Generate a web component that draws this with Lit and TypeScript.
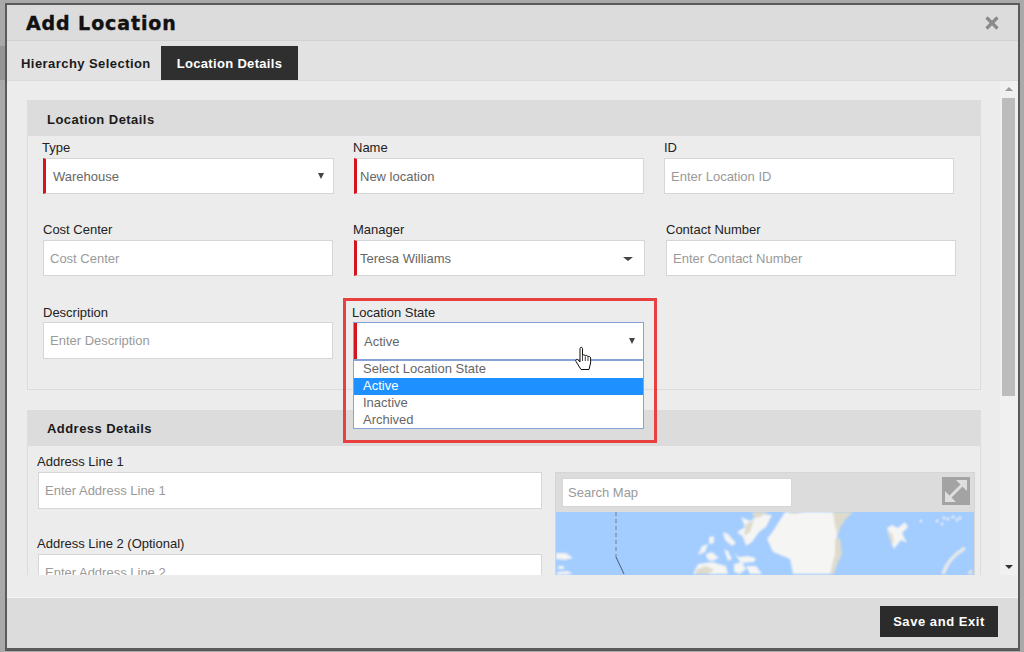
import { LitElement, html, css, svg } from "lit";
import { customElement } from "lit/decorators.js";

@customElement("app-root")
export class AppRoot extends LitElement {
  static styles = css`
    :host {
      display: flex;
      position: relative;
      width: 1024px;
      height: 652px;
      overflow: hidden;
      background: #a9a9a9;
      font-family: "Liberation Sans", Arial, sans-serif;
      font-size: 13px;
      color: #222;
    }
    .strip {
      width: 5px;
      flex: none;
      padding-top: 46px;
    }
    .strip .block {
      height: 34px;
      background: #959595;
    }
    .modal {
      width: 1011px;
      height: 643px;
      margin-top: 3px;
      border: 2px solid #5a5a5a;
      border-bottom-width: 3px;
      background: #ececec;
      display: flex;
      flex-direction: column;
      flex: none;
    }
    .head {
      height: 35px;
      flex: none;
      display: flex;
      justify-content: space-between;
      align-items: center;
      padding: 0 19px 0 19px;
      background: #dcdcdc;
      border-bottom: 1px solid #d2d2d2;
    }
    .title {
      font-family: "DejaVu Sans", sans-serif;
      font-weight: 700;
      font-size: 19px;
      color: #111;
      letter-spacing: 0.9px;
      -webkit-text-stroke: 0.4px #111;
      padding-top: 1px;
    }
    .close {
      display: block;
      width: 14px;
      height: 14px;
    }
    .tabs {
      height: 39px;
      flex: none;
      display: flex;
      align-items: flex-end;
      background: #e2e2e2;
      border-bottom: 1px solid #dadada;
    }
    .tab {
      height: 34px;
      line-height: 35px;
      font-weight: 700;
      letter-spacing: 0.44px;
      color: #1a1a1a;
      padding: 0 10px 0 14px;
    }
    .tab.on {
      background: #2f2f2f;
      color: #fff;
      padding: 0 16px 0 16px;
      letter-spacing: 0.32px;
    }
    .main {
      height: 494px;
      flex: none;
      display: flex;
      overflow: hidden;
    }
    .content {
      width: 993px;
      flex: none;
      padding: 19px 0 0 20px;
      box-sizing: border-box;
    }
    .panel {
      width: 954px;
      box-sizing: border-box;
      border: 1px solid #dcdcdc;
      border-top: 0;
      margin-bottom: 20px;
    }
    .panel.first {
      height: 290px;
    }
    .panel-head {
      height: 36px;
      line-height: 38px;
      margin: 0 -1px;
      padding-left: 20px;
      background: #dcdcdc;
      font-weight: 700;
      letter-spacing: 0.45px;
      color: #1a1a1a;
    }
    .panel.first .panel-head {
      line-height: 39px;
    }
    .row {
      display: grid;
      padding-left: 15px;
      padding-top: 4px;
    }
    .row.a {
      grid-template-columns: 291px 290px 290px;
      column-gap: 20px;
    }
    .row.b {
      grid-template-columns: 290px 291px 290px;
      column-gap: 21px;
      padding-top: 28px;
    }
    .row.c {
      grid-template-columns: 290px 291px;
      column-gap: 20px;
      padding-top: 29px;
    }
    label {
      display: block;
      height: 15px;
      line-height: 15px;
      margin: 0 0 3px -1px;
      color: #222;
    }
    label.flush {
      margin-left: 0;
    }
    .row.c label {
      margin-bottom: 2px;
    }
    input,
    .select {
      display: block;
      width: 100%;
      height: 36px;
      box-sizing: border-box;
      border: 1px solid #d6d6d6;
      background: #fff;
      padding: 0 6px;
      font: 13px "Liberation Sans", Arial, sans-serif;
      color: #666;
      outline: none;
      border-radius: 0;
    }
    input::placeholder {
      color: #9a9a9a;
      opacity: 1;
    }
    .row.c input {
      height: 37px;
    }
    .req {
      border-left: 3px solid #d4141e;
      padding-left: 3px;
    }
    .select {
      display: flex;
      align-items: center;
      justify-content: space-between;
      padding: 0 9px 0 7px;
      border-left: 3px solid #d4141e;
    }
    .select.tall {
      margin-top: 1px;
      padding-left: 3px;
      padding-top: 1px;
    }
    .select.focus {
      height: 38px;
      border: 1px solid #85a3d4;
      box-shadow: inset 3px 0 0 #d4141e;
      padding: 0 8px 0 10px;
    }
    .caret {
      width: 0;
      height: 0;
      border-left: 3px solid transparent;
      border-right: 3px solid transparent;
      border-top: 6px solid #444;
    }
    .caret.wide {
      border-left-width: 5px;
      border-right-width: 5px;
      border-top-width: 4px;
      margin-right: 2px;
    }
    .slot {
      position: relative;
    }
    .options {
      position: absolute;
      left: 0;
      right: 0;
      top: 55px;
      z-index: 2;
      box-sizing: border-box;
      height: 69px;
      background: #fff;
      border: 1px solid #85a3d4;
      color: #666;
    }
    .options div {
      height: 17px;
      line-height: 16px;
      padding-left: 9px;
    }
    .options .sel {
      background: #1e90ff;
      color: #fff;
    }
    .address {
      display: grid;
      grid-template-columns: 504px 420px;
      column-gap: 13px;
      padding: 8px 0 0 10px;
    }
    .address input {
      height: 37px;
    }
    .address .f + .f {
      margin-top: 27px;
    }
    .mapbox {
      margin-top: 18px;
      border: 1px solid #d6d6d6;
      background: #dcdcdc;
    }
    .map-bar {
      height: 39px;
      display: flex;
      justify-content: space-between;
      padding: 5px 4px 0 6px;
      box-sizing: border-box;
    }
    .map-bar input {
      width: 230px;
      height: 29px;
      padding: 0 5px;
    }
    .expand {
      display: block;
      width: 28px;
      height: 28px;
      margin-top: -1px;
    }
    .map {
      display: block;
      width: 418px;
      height: 120px;
    }
    .land {
      filter: blur(0.8px);
    }
    .bar {
      width: 17px;
      flex: none;
      background: #f0f0f0;
      display: flex;
      flex-direction: column;
      align-items: center;
    }
    .up {
      margin-top: 6px;
      width: 0;
      height: 0;
      border-left: 4px solid transparent;
      border-right: 4px solid transparent;
      border-bottom: 4px solid #9a9a9a;
    }
    .thumb {
      width: 13px;
      height: 298px;
      margin-top: 7px;
      background: #bcbcbc;
    }
    .down {
      margin-top: auto;
      margin-bottom: 6px;
      width: 0;
      height: 0;
      border-left: 4px solid transparent;
      border-right: 4px solid transparent;
      border-top: 4px solid #333;
    }
    .gap {
      height: 22px;
      flex: none;
    }
    .foot {
      flex: 1;
      display: flex;
      justify-content: flex-end;
      align-items: flex-start;
      padding: 8px 20px 0 0;
      background: #dcdcdc;
      border-top: 1px solid #f4f4f4;
    }
    .save {
      width: 118px;
      height: 31px;
      border: 0;
      background: #2b2b2b;
      color: #fff;
      font: 700 13px "Liberation Sans", Arial, sans-serif;
      letter-spacing: 0.55px;
      padding: 0;
    }
    .callout {
      position: absolute;
      left: 343px;
      top: 298px;
      width: 314px;
      height: 145px;
      box-sizing: border-box;
      border: 3px solid #e8403f;
      z-index: 3;
      pointer-events: none;
    }
    .hand {
      position: absolute;
      left: 574px;
      top: 346px;
      width: 20px;
      height: 26px;
      z-index: 4;
    }
  `;

  private mapShapes() {
    const snow = [
      "229,0 280,0 281,24 280,40 275,62 237,62 234,47 217,40 211,27 217,19",
      "331,16 336,13 342,16 349,10 352,15 346,21 351,31 345,28 338,37 335,30 333,24",
      "0,41 10,41 17,46 9,48 0,47",
      "2,54 8,54 8,57 2,57",
      "1,60 12,59 17,62 1,63",
      "185,5 194,9 204,2 216,3 210,15 203,20 196,30 190,34 187,25 181,20 189,15",
      "167,20 172,22 180,31 176,34 169,28",
      "153,25 158,24 158,31 153,32",
      "146,34 152,32 149,40 142,43",
      "150,42 156,40 163,46 156,49 151,47",
      "168,37 172,39 176,47 172,49",
      "178,41 183,45 192,44 200,46 198,50 185,51",
      "178,52 186,50 190,57 184,62 178,60",
      "190,54 200,54 206,62 194,62",
      "142,52 156,50 170,54 172,62 137,62",
    ];
    const tan = [
      "277,0 297,0 289,8 284,16 282,24 279,14",
      "279,27 284,26 286,42 282,50 278,62 274,62 279,42",
      "196,0 212,0 204,5 198,6",
      "230,0 248,0 238,2",
      "140,58 150,54 158,58 152,62 140,62",
      "190,12 198,8 194,20 188,24",
      "332,18 336,22 338,30 335,31",
    ];
    const specks = [
      [381, 9],
      [386, 12],
      [392, 7],
      [397, 5],
      [401, 8],
      [404, 6],
      [388, 6],
      [365, 9],
    ];
    return svg`
      <rect width="418" height="120" fill="#a3ccff"></rect>
      <g class="land">
        ${snow.map((p) => svg`<polygon points=${p} fill="#f5f5f3"></polygon>`)}
        ${tan.map((p) => svg`<polygon points=${p} fill="#dedbcd"></polygon>`)}
        ${specks.map(([x, y]) => svg`<circle cx=${x} cy=${y} r="1.4" fill="#f4f4f4"></circle>`)}
        <path d="M387 62 Q392 46 409 36" fill="none" stroke="#ebebe6" stroke-width="3.5"></path>
        <path d="M411 62 L415 57 L417 62Z" fill="#e8e8e4"></path>
      </g>
      <path d="M60 0 V45" stroke="#7d8ea8" stroke-width="1.3" stroke-dasharray="4 3" fill="none"></path>
      <path d="M60 45 L68 62" stroke="#4d5a6c" stroke-width="1" fill="none"></path>
    `;
  }

  render() {
    return html`
      <div class="strip"><div class="block"></div></div>
      <div class="modal">
        <div class="head">
          <span class="title">Add Location</span>
          <svg class="close" viewBox="0 0 14 14">
            <path d="M1.5 1.5 L12.5 12.5 M12.5 1.5 L1.5 12.5" stroke="#8a8a8a" stroke-width="3.2"></path>
          </svg>
        </div>
        <div class="tabs">
          <div class="tab">Hierarchy Selection</div>
          <div class="tab on">Location Details</div>
        </div>
        <div class="main">
          <div class="content">
            <section class="panel first">
              <div class="panel-head">Location Details</div>
              <div class="row a">
                <div class="f">
                  <label>Type</label>
                  <div class="select">Warehouse<span class="caret"></span></div>
                </div>
                <div class="f">
                  <label>Name</label>
                  <input class="req" .value=${"New location"} />
                </div>
                <div class="f">
                  <label class="flush">ID</label>
                  <input placeholder="Enter Location ID" />
                </div>
              </div>
              <div class="row b">
                <div class="f">
                  <label class="flush">Cost Center</label>
                  <input placeholder="Cost Center" />
                </div>
                <div class="f">
                  <label>Manager</label>
                  <div class="select tall">Teresa Williams<span class="caret wide"></span></div>
                </div>
                <div class="f">
                  <label class="flush">Contact Number</label>
                  <input placeholder="Enter Contact Number" />
                </div>
              </div>
              <div class="row c">
                <div class="f">
                  <label class="flush">Description</label>
                  <input placeholder="Enter Description" />
                </div>
                <div class="f slot">
                  <label>Location State</label>
                  <div class="select focus">Active<span class="caret"></span></div>
                  <div class="options">
                    <div>Select Location State</div>
                    <div class="sel">Active</div>
                    <div>Inactive</div>
                    <div>Archived</div>
                  </div>
                </div>
              </div>
            </section>
            <section class="panel">
              <div class="panel-head">Address Details</div>
              <div class="address">
                <div>
                  <div class="f">
                    <label>Address Line 1</label>
                    <input placeholder="Enter Address Line 1" />
                  </div>
                  <div class="f">
                    <label>Address Line 2 (Optional)</label>
                    <input placeholder="Enter Address Line 2" />
                  </div>
                </div>
                <div class="mapbox">
                  <div class="map-bar">
                    <input placeholder="Search Map" />
                    <svg class="expand" viewBox="0 0 28 28">
                      <rect width="28" height="28" fill="#a3a3a3"></rect>
                      <path d="M8 20 L20 8" stroke="#dedede" stroke-width="3"></path>
                      <path d="M14 3 H25 V14 Z M3 14 V25 H14 Z" fill="#dedede"></path>
                    </svg>
                  </div>
                  <svg class="map" viewBox="0 0 418 120">${this.mapShapes()}</svg>
                </div>
              </div>
            </section>
          </div>
          <div class="bar">
            <span class="up"></span>
            <span class="thumb"></span>
            <span class="down"></span>
          </div>
        </div>
        <div class="gap"></div>
        <div class="foot"><button class="save">Save and Exit</button></div>
      </div>
      <div class="callout"></div>
      <svg class="hand" viewBox="0 0 20 26">
        <path
          d="M6 2.5 C6 1 8.5 1 8.5 2.5 V9.5 C9 8.5 11 8.5 11.3 10 C11.8 9 13.7 9.2 14 10.8 C14.6 10 16.5 10.4 16.6 12 V17 L15 23.5 H7 L2 15.5 C1 13.5 3 12.6 4.2 14 L6 16 Z"
          fill="#fff"
          stroke="#111"
          stroke-width="1"
          stroke-linejoin="round"
        ></path>
        <path d="M8.5 10 V15 M11.3 10.5 V15 M14 11 V15" stroke="#111" stroke-width="0.8"></path>
      </svg>
    `;
  }
}
